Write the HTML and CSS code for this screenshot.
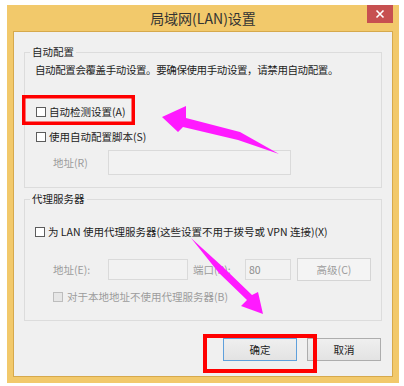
FILE: index.html
```html
<!DOCTYPE html>
<html lang="zh-CN">
<head>
<meta charset="utf-8">
<title>局域网(LAN)设置</title>
<link rel="stylesheet" href="styles.css">
</head>
<body>
<div class="window">
  <div class="titlebar">
    <span class="title">局域网(LAN)设置</span>
    <button class="close" aria-label="关闭">
      <svg width="10" height="10" viewBox="0 0 10 10"><path d="M1.5 1.5 L8.5 8.5 M8.5 1.5 L1.5 8.5" stroke="#fff" stroke-width="1.6" fill="none"/></svg>
    </button>
  </div>
  <div class="content">
    <fieldset class="group g1">
      <legend>自动配置</legend>
      <p class="desc">自动配置会覆盖手动设置。要确保使用手动设置，请禁用自动配置。</p>
      <label class="check c1"><span class="box"></span>自动检测设置(A)</label>
      <label class="check c2"><span class="box"></span>使用自动配置脚本(S)</label>
      <div class="row addr-r">
        <span class="dis lbl">地址(R)</span>
        <span class="input in-r"></span>
      </div>
    </fieldset>
    <fieldset class="group g2">
      <legend>代理服务器</legend>
      <label class="check c3"><span class="box"></span>为 LAN 使用代理服务器(这些设置不用于拨号或 VPN 连接)(X)</label>
      <div class="row addr-e">
        <span class="dis lbl">地址(E):</span>
        <span class="input in-e"></span>
        <span class="dis lbl-port">端口(P):</span>
        <span class="input in-p">80</span>
        <span class="btn-dis">高级(C)</span>
      </div>
      <label class="check c4 disabled"><span class="box"></span>对于本地地址不使用代理服务器(B)</label>
    </fieldset>
    <div class="buttons">
      <button class="btn default">确定</button>
      <button class="btn">取消</button>
    </div>
  </div>
</div>
<svg class="annot" width="404" height="386" viewBox="0 0 404 386">
  <rect x="23.75" y="96.75" width="109.5" height="26.5" fill="none" stroke="#ff0000" stroke-width="3.5"/>
  <rect x="205" y="336" width="110" height="35" fill="none" stroke="#ff0000" stroke-width="4"/>
  <polygon fill="#ff1aff" points="162,117 186,106 186,118 240,132 279,154 238,140 183,127 178,132"/>
  <polygon fill="#ff1aff" points="191,238 224,268 252,295 258,292 263,314 241,306 247,300 219,273"/>
</svg>
</body>
</html>
```

FILE: styles.css
```css
* { box-sizing: border-box; }
html, body { margin: 0; padding: 0; background: #ffffff; }
body {
  width: 404px;
  height: 386px;
  overflow: hidden;
  position: relative;
  font-family: "Noto Sans CJK SC", "Microsoft YaHei", sans-serif;
  font-size: 10.5px;
  color: #1c1c1c;
}
.window {
  margin: 5px 0 0 7px;
  width: 392px;
  height: 378px;
  background: #f2c96b;
  padding: 0 6px 6px 6px;
  display: flex;
  flex-direction: column;
}
.titlebar {
  height: 26px;
  display: grid;
  grid-template-columns: 1fr auto 1fr;
  align-items: center;
}
.title {
  grid-column: 2;
  font-size: 14px;
  color: #333;
  line-height: 26px;
}
.close {
  grid-column: 3;
  justify-self: end;
  align-self: start;
  width: 26px;
  height: 18px;
  margin-right: 0;
  padding: 0;
  border: 0;
  background: #c75050;
  display: flex;
  align-items: center;
  justify-content: center;
}
.close svg { display: block; }
.content {
  flex: 1;
  background: #f0f0f0;
  border: 1px solid #d6a94c;
  padding: 13px 10px 0 10px;
}
.group {
  margin: 0;
  padding: 0;
  border: 1px solid #dcdcdc;
  min-width: 0;
}
.group legend {
  margin-left: 5px;
  padding: 0 2px;
  line-height: 14px;
  height: 14px;
}
.g1 { padding-bottom: 12px; }
.g2 { margin-top: 4px; padding-bottom: 16px; }
.desc {
  margin: 4px 0 0 10px;
  line-height: 14px;
  letter-spacing: -0.4px;
  white-space: nowrap;
}
.check {
  display: flex;
  align-items: center;
  height: 14px;
  line-height: 14px;
  white-space: nowrap;
}
.box {
  width: 10px;
  height: 10px;
  background: #fff;
  border: 1px solid #5c5c5c;
  margin-right: 3px;
  flex: none;
}
.c1 { margin: 28px 0 0 11px; }
.c2 { margin: 11px 0 0 11px; }
.c3 { margin: 19px 0 0 10px; }
.c4 { margin: 9px 0 0 28px; }
.c4 .box { background: #e6e6e6; border-color: #bdbdbd; margin-right: 4px; }
.disabled, .dis { color: #9c9c9c; }
.row {
  display: flex;
  align-items: center;
}
.addr-r { margin: 6px 0 0 28px; height: 25px; }
.addr-e { margin: 19px 0 0 28px; height: 23px; }
.lbl { width: 55px; }
.lbl-port { width: 52px; margin-left: 5px; }
.input {
  display: block;
  background: #f2f2f2;
  border: 1px solid #dadada;
  color: #8c8c8c;
  padding-left: 3px;
  line-height: 19px;
}
.in-r { width: 183px; height: 25px; }
.in-e { width: 80px; height: 21px; }
.in-p { width: 46px; height: 21px; }
.btn-dis {
  margin-left: 6px;
  width: 74px;
  height: 23px;
  border: 1px solid #d5d5d5;
  background: #f4f4f4;
  color: #9c9c9c;
  display: flex;
  align-items: center;
  justify-content: center;
}
.buttons {
  display: flex;
  justify-content: flex-end;
  gap: 10px;
  margin: 17px 1px 0 0;
}
.btn {
  width: 74px;
  height: 23px;
  padding: 0;
  font-family: inherit;
  font-size: 10.5px;
  color: #1c1c1c;
  background: linear-gradient(#efefef, #e3e3e3);
  border: 1px solid #adadad;
}
.btn.default { border-color: #5fa0dc; }
.annot {
  position: absolute;
  top: 0;
  left: 0;
  pointer-events: none;
}
```
